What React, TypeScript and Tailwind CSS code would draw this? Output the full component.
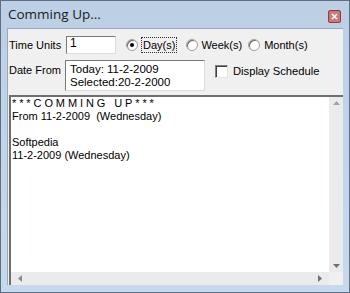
import React from 'react'

const ui = { fontFamily: '"Liberation Sans", Arial, sans-serif' }

function Radio({ checked }: { checked?: boolean }) {
  return (
    <span className="relative inline-block h-[12px] w-[12px] shrink-0 rounded-full border border-[#a0a0a0] bg-white shadow-[inset_1px_1px_0_#696969]">
      {checked && <span className="absolute left-[3px] top-[3px] h-[4px] w-[4px] rounded-full bg-black" />}
    </span>
  )
}

export default function App() {
  return (
    <div className="h-[293px] w-[350px] overflow-hidden bg-white" style={ui}>
      <div className="flex h-full w-full flex-col border border-[#5d6f82] bg-gradient-to-b from-[#bccfe5] to-[#c7d9ed]">
        {/* barre de titre */}
        <div className="flex h-[27px] shrink-0 items-center justify-between pl-[7px] pr-[8px]">
          <span className="text-[13.5px] text-[#1b1b1b]" style={{ fontFamily: '"Open Sans", "Liberation Sans", sans-serif' }}>
            Comming Up...
          </span>
          <span className="mt-[3px] flex h-[13px] w-[13px] items-center justify-center rounded-[2px] border border-[#8e3b3b] bg-[#c97a78]">
            <svg width="7" height="7" viewBox="0 0 7 7">
              <path d="M1 1L6 6M6 1L1 6" stroke="#fff" strokeWidth="1.6" />
            </svg>
          </span>
        </div>

        {/* zone client */}
        <div className="mx-[6px] flex flex-1 flex-col border-l border-t border-[#9aa9b8] bg-[#f0f0f0] text-[11px] text-black">
          <div className="flex h-[30px] items-center pt-[2px]">
            <span className="w-[58px] pl-[1px]">Time Units</span>
            <span className="flex h-[18px] w-[50px] items-end border border-[#7a7a7a] border-r-[#dcdcdc] border-b-[#dcdcdc] bg-white pb-[1px] pl-[3px] text-[12px]">1</span>
            <span className="ml-[10px] flex items-center">
              <Radio checked />
              <span className="ml-[3px] border border-dotted border-[#333] px-[1px] leading-[14px]">Day(s)</span>
            </span>
            <span className="ml-[9px] flex items-center">
              <Radio />
              <span className="ml-[3px]">Week(s)</span>
            </span>
            <span className="ml-[6px] flex items-center">
              <Radio />
              <span className="ml-[4px]">Month(s)</span>
            </span>
          </div>

          <div className="flex h-[36px] items-start pt-[1px]">
            <span className="w-[57px] pl-[1px] pt-[2px]">Date From</span>
            <div className="h-[31px] w-[140px] border border-[#7a7a7a] border-r-[#dcdcdc] border-b-[#dcdcdc] bg-white pl-[4px] pt-[2px] text-[11.5px] leading-[13px]">
              <div>Today: 11-2-2009</div>
              <div>Selected:20-2-2000</div>
            </div>
            <span className="ml-[10px] mt-[3px] flex items-center">
              <span className="h-[13px] w-[13px] border border-[#808080] border-r-[#e3e3e3] border-b-[#e3e3e3] bg-white shadow-[inset_1px_1px_0_#404040]" />
              <span className="ml-[5px] text-[11.2px]">Display Schedule</span>
            </span>
          </div>

          {/* mémo */}
          <div className="ml-[1px] flex flex-1 flex-col border-l-2 border-t-2 border-[#6f6f6f] bg-white">
            <div className="flex flex-1">
              <div className="flex-1 pl-[1px] leading-[13px]">
                <div className="tracking-[2.9px]">***COMMING UP***</div>
                <div>From 11-2-2009&nbsp; (Wednesday)</div>
                <div>&nbsp;</div>
                <div>Softpedia</div>
                <div>11-2-2009 (Wednesday)</div>
              </div>
              <div className="flex w-[14px] flex-col items-center justify-between bg-[#ebebeb] py-[4px]">
                <svg width="7" height="4" viewBox="0 0 7 4"><path d="M0 4L3.5 0L7 4Z" fill="#a3a3a3" /></svg>
                <svg width="7" height="4" viewBox="0 0 7 4"><path d="M0 0L3.5 4L7 0Z" fill="#707070" /></svg>
              </div>
            </div>
            <div className="flex h-[13px] items-center bg-[#ebebeb]">
              <div className="flex flex-1 items-center justify-between px-[7px]">
                <svg width="4" height="7" viewBox="0 0 4 7"><path d="M4 0L0 3.5L4 7Z" fill="#8a8a8a" /></svg>
                <svg width="4" height="7" viewBox="0 0 4 7"><path d="M0 0L4 3.5L0 7Z" fill="#707070" /></svg>
              </div>
              <div className="w-[14px] self-stretch bg-[#f0f0f0]" />
            </div>
          </div>
        </div>

        <div className="h-[7px] shrink-0" />
      </div>
    </div>
  )
}
